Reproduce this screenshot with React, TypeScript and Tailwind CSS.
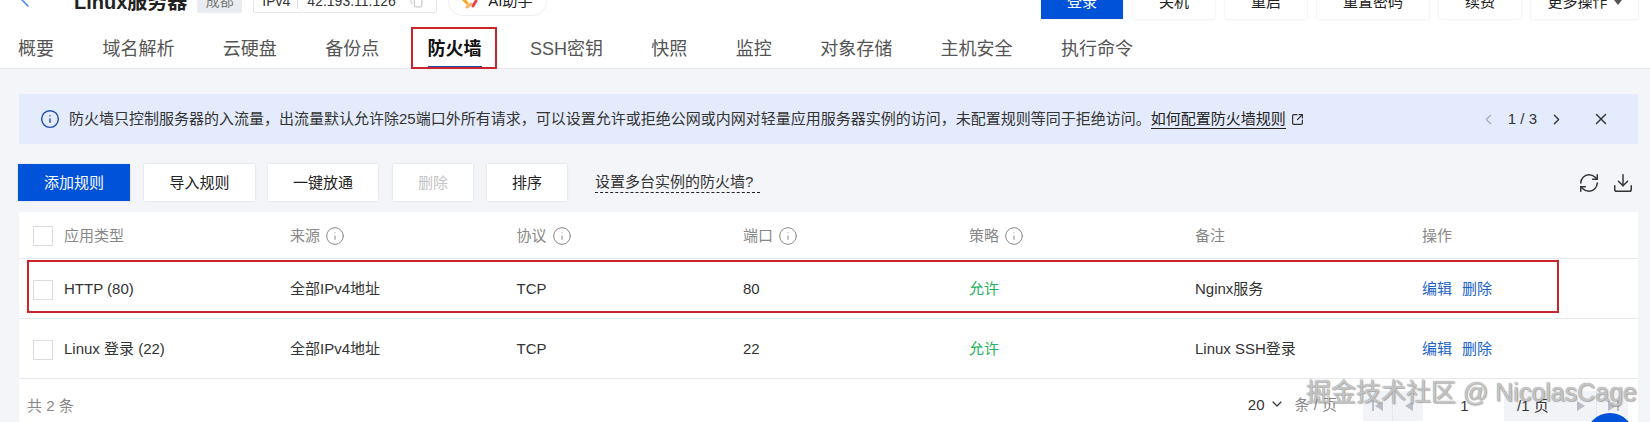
import { ArrowLeft, Copy, ChevronDown, ChevronLeft, ChevronRight, X, RefreshCw, Download, Info, SquareArrowOutUpRight } from "lucide-react";

const FONT = "font-['Liberation_Sans','Noto_Sans_CJK_SC',sans-serif]";
const COLS = "grid grid-cols-[271px_226.5px_226.5px_226px_226px_227px_1fr] items-center pt-[2px]";

function Btn({ children, primary, disabled, className = "" }: { children: React.ReactNode; primary?: boolean; disabled?: boolean; className?: string }) {
  return (
    <div
      className={`flex items-center justify-center pt-[1px] text-[15px] shadow-[0_0_2px_rgba(0,0,0,0.12)] ${
        primary ? "bg-[#0052d9] text-white" : disabled ? "bg-white text-[#c4c4c4]" : "bg-white text-[#222]"
      } ${className}`}
    >
      {children}
    </div>
  );
}

function Hint() {
  return <Info size={20} strokeWidth={1.2} className="text-[#888]" />;
}

function Check() {
  return <div className="ml-[14px] h-[20px] w-[20px] border border-[#ddd] bg-white" />;
}

function Row({ name, port, note, last }: { name: string; port: string; note: string; last?: boolean }) {
  return (
    <div className={`${COLS} relative h-[60px] border-b border-[#e8e9ee] text-[15px] text-[#333] ${last ? "h-[59px]" : ""}`}>
      <div className="flex items-center gap-[11px]">
        <Check />
        <span>{name}</span>
      </div>
      <span>全部IPv4地址</span>
      <span>TCP</span>
      <span>{port}</span>
      <span className="text-[#1fb25d]">允许</span>
      <span>{note}</span>
      <div className="flex gap-[10px] text-[#1a62c9]">
        <span>编辑</span>
        <span>删除</span>
      </div>
    </div>
  );
}

function Tri({ left, bar }: { left?: boolean; bar?: boolean }) {
  return (
    <svg width="14" height="14" viewBox="0 0 14 14" fill="#b9bcc4">
      {left ? <path d="M12 2v10L4 7z" /> : <path d="M2 2v10l8-5z" />}
      {bar && (left ? <rect x="1" y="2" width="2" height="10" /> : <rect x="11" y="2" width="2" height="10" />)}
    </svg>
  );
}

export default function App() {
  const tabs = ["概要", "域名解析", "云硬盘", "备份点", "防火墙", "SSH密钥", "快照", "监控", "对象存储", "主机安全", "执行命令"];
  return (
    <div className={`${FONT} relative h-[422px] w-[1650px] overflow-hidden bg-[#f3f5f9]`}>
      <div className="bg-white">
        {/* header */}
        <div className="mt-[-16px] flex h-[35px] items-center justify-between pl-[18px] pr-[12px]">
          <div className="flex items-center">
            <ArrowLeft size={24} strokeWidth={1.4} className="ml-[-2px] mt-[-5px] text-[#3d7dff]" />
            <span className="ml-[34px] text-[20px] font-bold text-[#222]">Linux服务器</span>
            <span className="ml-[10px] flex h-[23px] w-[45px] items-center justify-center rounded-[2px] bg-[#e9ecf1] text-[14px] text-[#777]">成都</span>
            <div className="ml-[11px] flex h-[22px] w-[184px] items-center rounded-[2px] border border-[#e4e6eb] bg-white pl-[8px] text-[14px] text-[#333]">
              <span>IPv4</span>
              <span className="ml-[7px] h-[14px] w-px bg-[#ddd]" />
              <span className="ml-[9px]">42.193.11.126</span>
              <Copy size={13} strokeWidth={1.4} className="ml-[14px] text-[#aaa]" />
            </div>
            <div className="ml-[11px] flex h-[29px] w-[99px] items-center rounded-full border border-[#eceef2] bg-white pl-[11px] text-[15px] text-[#222]">
              <svg width="20" height="20" viewBox="0 0 20 20" fill="none" strokeWidth="3" strokeLinecap="round">
                <path d="M3 7l4 4" stroke="#f5a623" />
                <path d="M7 15l4-3" stroke="#f7b267" />
                <path d="M13 14l3-5" stroke="#e5484d" />
                <path d="M11 5l5 1" stroke="#8e6be8" />
              </svg>
              <span className="ml-[8px]">AI助手</span>
            </div>
          </div>
          <div className="flex h-full gap-[10px]">
            <Btn primary className="w-[82px]">登录</Btn>
            <Btn className="w-[82px]">关机</Btn>
            <Btn className="w-[82px]">重启</Btn>
            <Btn className="w-[112px]">重置密码</Btn>
            <Btn className="w-[82px]">续费</Btn>
            <Btn className="w-[107px] gap-[6px]">
              更多操作
              <svg width="8" height="5" viewBox="0 0 8 5" fill="#555"><path d="M0 0h8L4 5z" /></svg>
            </Btn>
          </div>
        </div>
        {/* tabs */}
        <div className="flex h-[50px] gap-[48.4px] border-b border-[#e8e9ee] pl-[18px] text-[18px] text-[#555]">
          {tabs.map((t) => (
            <div key={t} className={`relative flex items-center pt-[12px] ${t === "防火墙" ? "font-bold text-[#111]" : ""}`}>
              {t}
              {t === "防火墙" && (
                <>
                  <span className="absolute bottom-0 left-0 right-0 h-[2px] bg-[#1f4bb0]" />
                  <span className="absolute bottom-[-1px] left-[-17px] right-[-15px] top-[8px] border-2 border-[#c9252d]" />
                </>
              )}
            </div>
          ))}
        </div>
      </div>

      {/* alert */}
      <div className="ml-[19px] mr-[12px] mt-[25px] flex h-[50px] items-center bg-[#e3ebfc] pl-[21px] pr-[28px] text-[15px] text-[#333]">
        <Info size={20} strokeWidth={1.7} className="text-[#1f4bb0]" />
        <span className="ml-[9px] whitespace-nowrap">
          防火墙只控制服务器的入流量，出流量默认允许除25端口外所有请求，可以设置允许或拒绝公网或内网对轻量应用服务器实例的访问，未配置规则等同于拒绝访问。
        </span>
        <span className="whitespace-nowrap border-b border-[#222] leading-[19px] text-[#222]">如何配置防火墙规则</span>
        <SquareArrowOutUpRight size={13} strokeWidth={2.2} className="ml-[5px] text-[#333]" />
        <div className="ml-auto flex items-center">
          <ChevronLeft size={17} strokeWidth={1.5} className="text-[#aaa]" />
          <span className="ml-[11px]">1 / 3</span>
          <ChevronRight size={17} strokeWidth={1.9} className="ml-[11px] text-[#333]" />
          <X size={18} strokeWidth={1.9} className="ml-[27px] text-[#333]" />
        </div>
      </div>

      {/* toolbar */}
      <div className="ml-[18px] mr-[16px] mt-[20px] flex h-[37px] items-center">
        <Btn primary className="h-full w-[112px]">添加规则</Btn>
        <Btn className="ml-[14px] h-full w-[111px]">导入规则</Btn>
        <Btn className="ml-[13px] h-full w-[110px]">一键放通</Btn>
        <Btn disabled className="ml-[15px] h-full w-[80px]">删除</Btn>
        <Btn className="ml-[14px] h-full w-[80px]">排序</Btn>
        <span className="ml-[28px] border-b border-dashed border-[#222] pb-[1px] pr-[7px] text-[15px] leading-[19px] text-[#333]">设置多台实例的防火墙?</span>
        <div className="ml-auto flex items-center gap-[12px] text-[#333]">
          <RefreshCw size={22} strokeWidth={1.6} />
          <Download size={22} strokeWidth={1.6} />
        </div>
      </div>

      {/* table */}
      <div className="ml-[19px] mr-[12px] mt-[11px] bg-white">
        <div className={`${COLS} h-[47px] border-b border-[#e8e9ee] text-[15px] text-[#888]`}>
          <div className="flex items-center gap-[11px]">
            <Check />
            <span>应用类型</span>
          </div>
          <span className="flex items-center gap-[5px]">来源<Hint /></span>
          <span className="flex items-center gap-[5px]">协议<Hint /></span>
          <span className="flex items-center gap-[5px]">端口<Hint /></span>
          <span className="flex items-center gap-[5px]">策略<Hint /></span>
          <span>备注</span>
          <span>操作</span>
        </div>
        <div className="relative">
          <Row name="HTTP (80)" port="80" note="Nginx服务" />
          <span className="absolute left-[8px] top-[1px] h-[53px] w-[1532px] border-2 border-[#c9252d]" />
        </div>
        <Row name="Linux 登录 (22)" port="22" note="Linux SSH登录" last />
        <div className="flex h-[56px] items-start justify-between pl-[8px] pr-[10px] text-[15px]">
          <span className="mt-[16px] text-[#888]">共 2 条</span>
          <div className="flex items-start">
            <span className="mt-[15px] text-[#333]">20</span>
            <ChevronDown size={16} strokeWidth={1.8} className="ml-[5px] mt-[17px] text-[#333]" />
            <span className="ml-[9px] mt-[15px] text-[#888]">条 / 页</span>
            <div className="ml-[26px] mt-[12px] flex h-[30px] w-[265px] items-center bg-[#f2f3f6] text-[#333]">
              <span className="flex h-full w-[30px] items-center justify-center border-r border-[#e6e7eb]"><Tri left bar /></span>
              <span className="flex h-full w-[30px] items-center justify-center"><Tri left /></span>
              <span className="flex h-full w-[81px] items-center justify-center bg-white pl-[2px]">1</span>
              <span className="flex h-full w-[63px] items-center pl-[13px]">/1 页</span>
              <span className="flex h-full w-[30px] items-center justify-center border-r border-[#e6e7eb]"><Tri /></span>
              <span className="flex h-full w-[31px] items-center justify-center"><Tri bar /></span>
            </div>
          </div>
        </div>
      </div>

      {/* floating */}
      <div className="absolute left-[1586px] top-[413px] h-[48px] w-[48px] rounded-full bg-[#0052d9]" />
      <div className="absolute left-[1306px] top-[376px] whitespace-nowrap text-[25px] leading-[32px] text-[rgba(255,255,255,0.6)] [text-shadow:0_0_1px_#666,1px_1px_1px_rgba(80,80,80,0.4)]">
        掘金技术社区 @ NicolasCage
      </div>
    </div>
  );
}
